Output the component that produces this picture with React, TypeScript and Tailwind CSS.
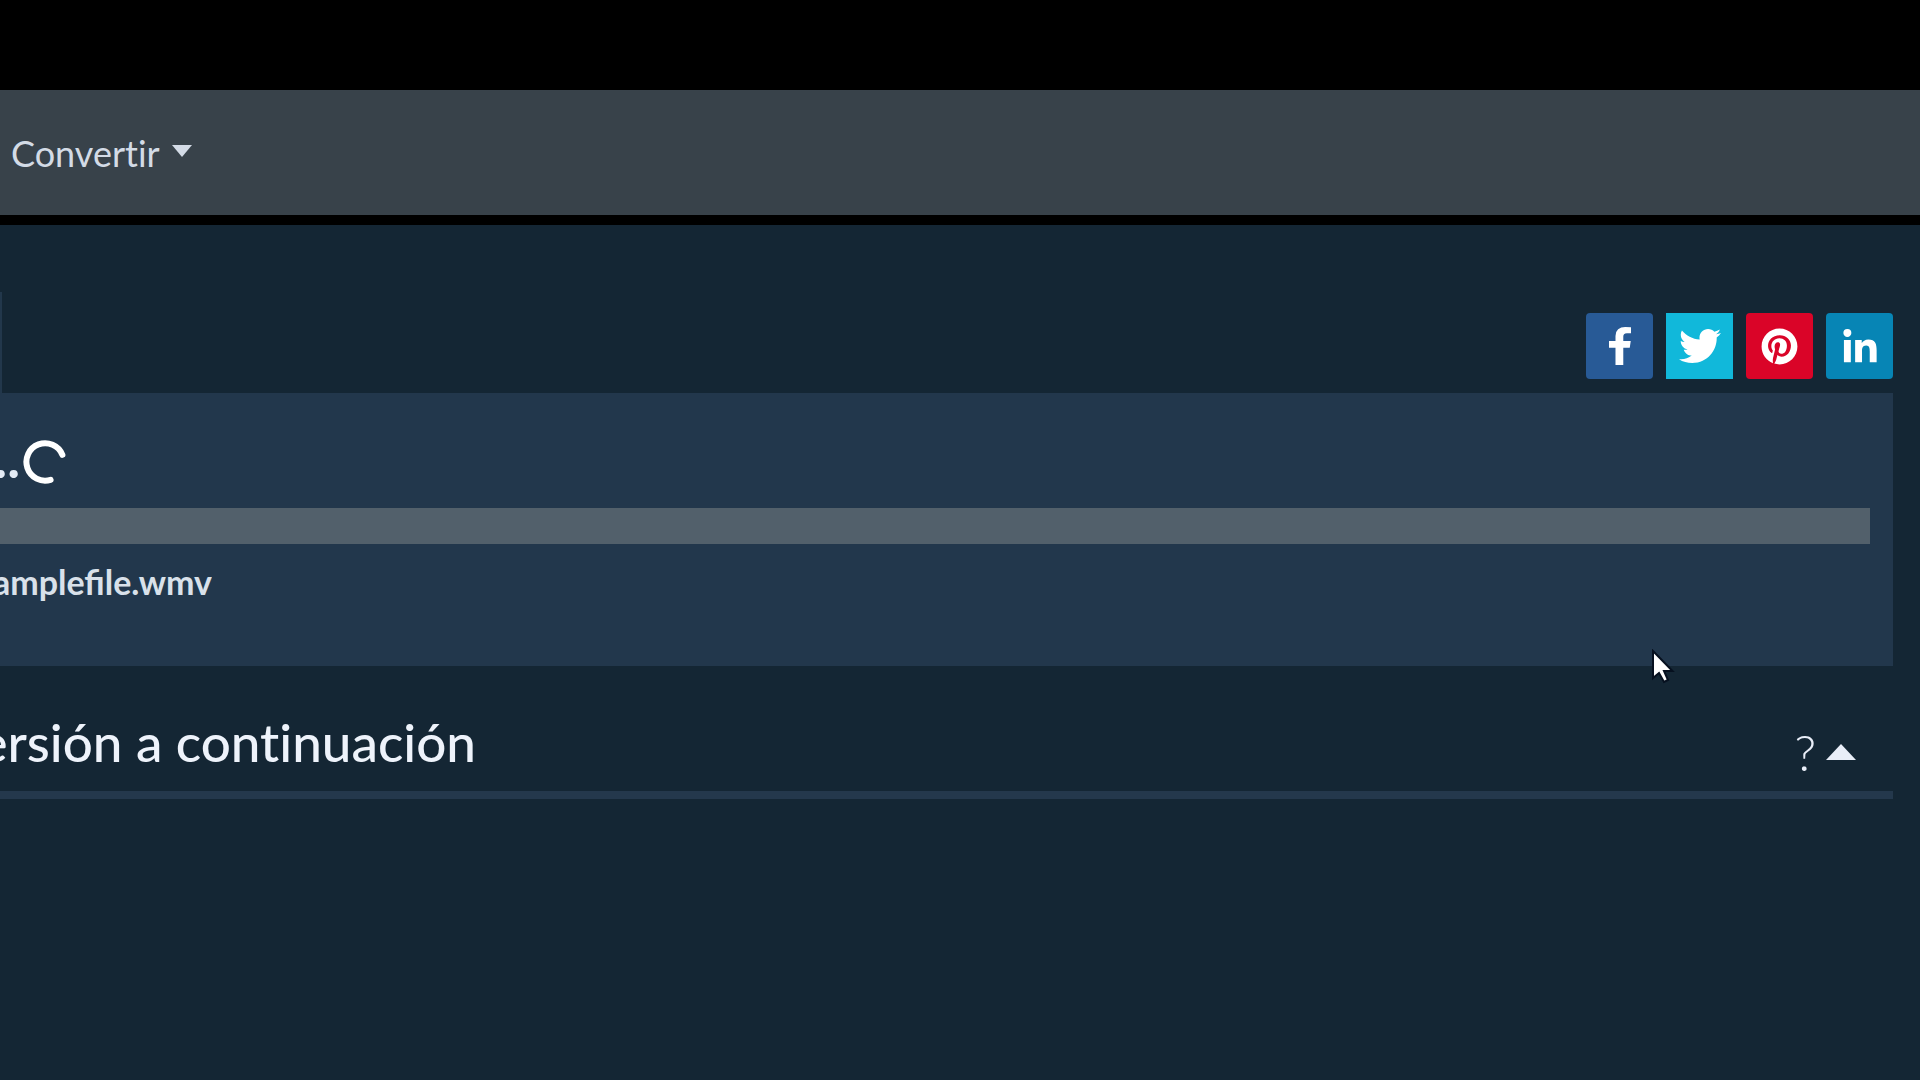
import React from 'react';
import { FaTwitter, FaPinterest, FaLinkedinIn } from 'react-icons/fa';

const FacebookIcon: React.FC = () => (
  <svg width="22" height="38" viewBox="479 0 864 1664" preserveAspectRatio="none" fill="currentColor" aria-hidden="true">
    <path d="M1343 12v264h-157q-86 0-116 36t-30 108v189h293l-39 296h-254v759h-306v-759h-255v-296h255v-218q0-186 104-288.500t277-102.500q147 0 228 12z" />
  </svg>
);

const shareLinks = [
  { name: 'Facebook', color: 'bg-[#285a96] rounded-sm', icon: <FacebookIcon /> },
  { name: 'Twitter', color: 'bg-[#11b8da]', icon: <FaTwitter size={42} /> },
  { name: 'Pinterest', color: 'bg-[#da0428] rounded-sm', icon: <FaPinterest size={37} /> },
  { name: 'LinkedIn', color: 'bg-[#0785b5] rounded-sm pt-1', icon: <FaLinkedinIn size={38} /> },
];

const NavBar: React.FC = () => (
  <nav className="mt-[90px] flex h-[125px] items-center bg-[#38424a] pl-[11px]">
    <button type="button" className="flex items-center gap-3 text-[36px] leading-10 text-[#d3dbe6] [font-variant-ligatures:none]">
      Convertir
      <svg width="20" height="12" viewBox="0 0 20 12" fill="currentColor" className="mb-1" aria-hidden="true">
        <path d="M0 0h20L10 12z" />
      </svg>
    </button>
  </nav>
);

const ShareBar: React.FC = () => (
  <div className="flex justify-between">
    <div className="mt-[67px] w-0.5 bg-[#22374b]"></div>
    <div className="mt-[88px] mb-3.5 flex gap-[13px]">
      {shareLinks.map(link => (
        <a
          key={link.name}
          href="#"
          aria-label={link.name}
          className={`flex h-[66px] w-[67px] items-center justify-center text-white ${link.color}`}
        >
          {link.icon}
        </a>
      ))}
    </div>
  </div>
);

const Spinner: React.FC = () => (
  <svg width="44" height="44" viewBox="0 0 44 44" fill="none" stroke="currentColor" strokeWidth="6" strokeLinecap="round" aria-hidden="true">
    <path d="M39.4 14.8A18.7 18.7 0 1 0 27.6 39.8" />
  </svg>
);

const UploadPanel: React.FC = () => (
  <section className="bg-[#22374c] pt-9 pb-16">
    <div className="flex h-[66px] items-center gap-[3px] text-white">
      <div className="flex w-5 justify-end overflow-hidden pb-2 text-[54px] leading-[66px] font-bold text-[#e4ebf5]">..</div>
      <Spinner />
    </div>
    <div role="progressbar" aria-label="Progreso" className="mt-[13px] mr-[23px] h-9 bg-[#52606b]"></div>
    <div className="mt-[18px] flex w-[212px] justify-end overflow-hidden text-[34px] leading-10 font-bold text-[#d9e1ea]">
      amplefile.wmv
    </div>
  </section>
);

const SettingsHeader: React.FC = () => (
  <header className="mt-[43px] flex items-center justify-between border-b-8 border-[#24384c] pb-4">
    <h2 className="flex w-[476px] justify-end overflow-hidden text-[53px] leading-[66px] font-medium whitespace-nowrap text-[#eef3fb] [font-variant-ligatures:none]">
      ersión a continuación
    </h2>
    <button type="button" aria-label="Ayuda" className="mt-5 mr-[37px] flex items-center gap-2.5 text-[#e9eef8]">
      <span className="text-[50px] leading-[46px] font-light">?</span>
      <svg width="30" height="16" viewBox="0 0 30 16" fill="currentColor" aria-hidden="true">
        <path d="M0 16L15 0l15 16z" />
      </svg>
    </button>
  </header>
);

const Pointer: React.FC = () => (
  <svg className="absolute top-[649px] left-[1651px]" width="24" height="36" viewBox="0 0 24 36" aria-hidden="true">
    <path d="M2 2v27l6-5 5 9 4-2-4-9h8.500z" fill="#fff" stroke="#06101f" strokeWidth="2" />
  </svg>
);

export default function App() {
  return (
    <div className="relative flex min-h-screen flex-col overflow-hidden bg-black font-['Lato',sans-serif]">
      <NavBar />
      <main className="mt-2.5 flex-1 bg-[#142634] pr-[27px]">
        <ShareBar />
        <UploadPanel />
        <SettingsHeader />
      </main>
      <Pointer />
    </div>
  );
}
